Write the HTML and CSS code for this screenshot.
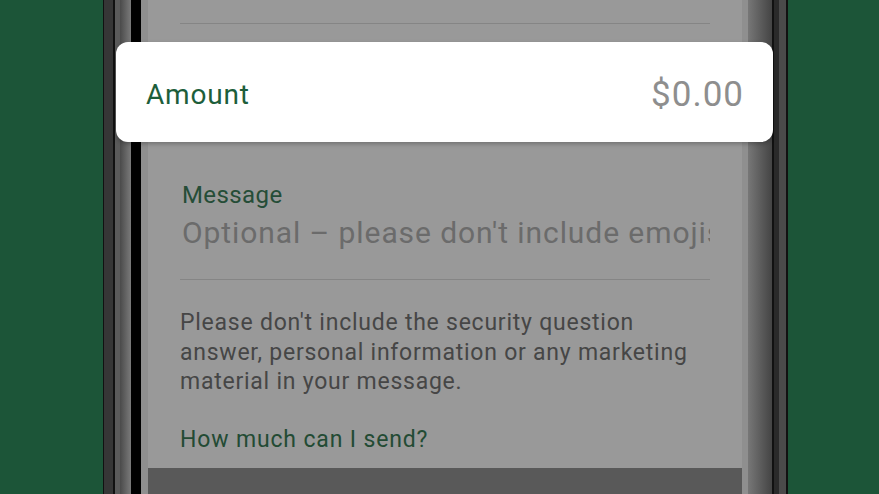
FILE: index.html
```html
<!DOCTYPE html>
<html>
<head>
<meta charset="utf-8">
<link rel="stylesheet" href="styles.css">
</head>
<body>
<div class="stage">
  <div class="phone">
    <div class="screen">
      <div class="content">
        <div class="divider"></div>
        <div class="hidden-row"></div>
        <div class="field">
          <div class="field-label">Message</div>
          <div class="field-input">Optional – please don't include emojis</div>
        </div>
        <div class="divider"></div>
        <p class="note">Please don't include the security question answer, personal information or any marketing material in your message.</p>
        <div class="link">How much can I send?</div>
      </div>
      <div class="button"></div>
    </div>
  </div>
  <div class="amount-card">
    <span class="amount-label">Amount</span>
    <span class="amount-value">$0.00</span>
  </div>
</div>
</body>
</html>
```
FILE: styles.css
```css
html, body {
  margin: 0;
  padding: 0;
  height: 100%;
  overflow: hidden;
}
body {
  background: #1c5538;
  font-family: Roboto, "Noto Sans", sans-serif;
}
.stage {
  position: relative;
  width: 879px;
  height: 494px;
}
.phone {
  margin-left: 103px;
  width: 685px;
  height: 494px;
  display: flex;
  box-sizing: border-box;
  padding: 0 40px 0 38px;
  background: linear-gradient(to right,
    #111 0px, #111 1px,
    #363636 1px, #363636 10px,
    #111 10px, #111 12px,
    #5a5a5a 12px, #5a5a5a 17px,
    #4a4a4a 17px, #7a7a7a 28px,
    #000 28px, #000 38px,
    #000 38px, #000 645px,
    #777 645px, #444 669px,
    #111 669px, #111 671px,
    #2a2a2a 671px, #2a2a2a 676px,
    #4a4a4a 676px, #4a4a4a 683px,
    #111 683px, #111 685px);
}
.screen {
  flex: 1;
  min-width: 0;
  display: flex;
  flex-direction: column;
  background: #999;
  box-shadow: inset 7px 0 0 #8f8f8f, inset -6px 0 0 #8f8f8f;
  padding: 0 6px 0 7px;
}
.content {
  flex: 1;
  min-width: 0;
  display: flex;
  flex-direction: column;
  padding: 23px 32px 0 32px;
}
.divider {
  height: 1px;
  background: #858585;
}
.hidden-row {
  height: 157px;
}
.field {
  display: flex;
  flex-direction: column;
  min-width: 0;
  padding-left: 2px;
}
.field-label {
  font-size: 24px;
  line-height: 28px;
  letter-spacing: 0.4px;
  color: #254d37;
}
.field-input {
  margin-top: 6px;
  font-size: 30px;
  line-height: 36px;
  letter-spacing: 0.92px;
  color: #6b6b6b;
  white-space: nowrap;
  overflow: hidden;
  margin-bottom: 28px;
}
.note {
  margin: 28px 0 0 0;
  font-size: 23px;
  line-height: 29.5px;
  letter-spacing: 0.76px;
  color: #464646;
}
.link {
  margin-top: 28px;
  font-size: 23px;
  line-height: 29.5px;
  letter-spacing: 0.85px;
  color: #234b34;
}
.button {
  height: 26px;
  background: #595959;
}
.amount-card {
  position: absolute;
  left: 116px;
  top: 42px;
  width: 657px;
  height: 100px;
  box-sizing: border-box;
  background: #fff;
  border-radius: 12px;
  box-shadow: 0 2px 4px rgba(0, 0, 0, 0.25);
  display: flex;
  align-items: center;
  justify-content: space-between;
  padding: 5px 29px 0 30px;
}
.amount-label {
  font-size: 28px;
  letter-spacing: 0.8px;
  color: #1d5e3b;
}
.amount-value {
  font-size: 35px;
  letter-spacing: 1px;
  color: #8e8e8e;
}
```
